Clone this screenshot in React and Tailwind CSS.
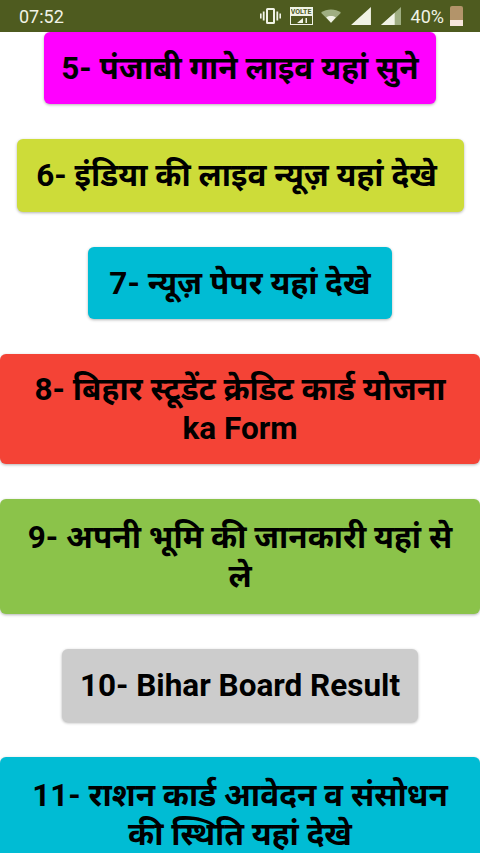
import React from 'react';

const buttons = [
  { label: '5- पंजाबी गाने लाइव यहां सुने', color: 'bg-[#ff00ff]', size: 'w-[392px] h-[72px] px-[10px]' },
  { label: '6- इंडिया की लाइव न्यूज़ यहां देखे', color: 'bg-[#cddc39]', size: 'w-[447px] h-[73px] pl-[10px] pr-[17px]' },
  { label: '7- न्यूज़ पेपर यहां देखे', color: 'bg-[#00bcd4]', size: 'w-[304px] h-[72px] px-[10px]' },
  { label: '8- बिहार स्टूडेंट क्रेडिट कार्ड योजना ka Form', color: 'bg-[#f44336]', size: 'w-full h-[110px] px-[20px]' },
  { label: '9- अपनी भूमि की जानकारी यहां से ले', color: 'bg-[#8bc34a]', size: 'w-full h-[115px] px-[20px]' },
  { label: '10- Bihar Board Result', color: 'bg-[#cccccc]', size: 'w-[356px] h-[73px] px-[10px]' },
  { label: '11- राशन कार्ड आवेदन व संसोधन की स्थिति यहां देखे', color: 'bg-[#00bcd4]', size: 'w-full h-[115px] px-[20px]' },
];

const StatusIcons = () => (
  <div className="flex items-center text-[#f1f3e6]">
    <svg width="21" height="16" viewBox="0 0 21 16" className="mr-[9px]" fill="currentColor">
      <path d="M6 1.500A1.500 1.500 0 0 1 7.500 0h6A1.500 1.500 0 0 1 15 1.500v13a1.500 1.500 0 0 1-1.500 1.500h-6A1.500 1.500 0 0 1 6 14.500zM8 2v12h5V2z" />
      <rect x="2.800" y="3.500" width="1.800" height="9" />
      <rect x="16.400" y="3.500" width="1.800" height="9" />
      <rect x="0" y="5.500" width="1.600" height="5" />
      <rect x="19.400" y="5.500" width="1.600" height="5" />
    </svg>
    <div className="w-[23px] h-[18px] mr-[8px] border border-[#f1f3e6] flex flex-col">
      <div className="h-[8px] bg-[#f1f3e6] text-[#4e5b1f] text-[7px] leading-[8px] font-bold text-center overflow-hidden">VOLTE</div>
      <svg width="21" height="8" viewBox="0 0 21 8" fill="currentColor">
        <path d="M6 7l6-5v5z M14.500 2h1.500v5h-1.500z" />
      </svg>
    </div>
    <svg width="20" height="14" viewBox="0 0 21 14" className="mr-[10px]">
      <path d="M0 3.500C6 -1 15 -1 21 3.500L10.500 14z" fill="#9fae82" />
      <path d="M5.500 8.500c3-2 7-2 10 0L10.500 14z" fill="currentColor" />
    </svg>
    <svg width="20" height="18" viewBox="0 0 21 19" className="mr-[10px]">
      <path d="M0 19L21 0v19z" fill="currentColor" />
    </svg>
    <svg width="20" height="18" viewBox="0 0 19 17" className="mr-[10px]">
      <path d="M0 17L19 0v17z" fill="#9fae82" />
      <path d="M0 17L13 5.400V17z" fill="currentColor" />
    </svg>
    <span className="text-[18px] mr-[6px]">40%</span>
    <div className="w-[13px] h-[20px] rounded-[2px] bg-[#b3946a] flex items-end">
      <div className="w-full h-[6px] bg-[#f7e6dc]" />
    </div>
  </div>
);

export default function App() {
  return (
    <div className="w-[480px] h-[853px] overflow-hidden bg-white font-['Roboto','Noto_Sans',sans-serif]">
      <div className="h-[32px] bg-[#4e5b1f] flex items-center justify-between pl-[19px] pr-[17px]">
        <span className="text-[#f1f3e6] text-[18px]">07:52</span>
        <StatusIcons />
      </div>
      <div className="flex flex-col items-center gap-[35px]">
        {buttons.map((b) => (
          <button
            key={b.label}
            className={`${b.color} ${b.size} shrink-0 rounded-[6px] text-[#000] text-[31.5px] leading-[39px] font-bold text-center shadow-[0_1px_3px_rgba(0,0,0,0.3)]`}
          >
            {b.label}
          </button>
        ))}
      </div>
    </div>
  );
}
